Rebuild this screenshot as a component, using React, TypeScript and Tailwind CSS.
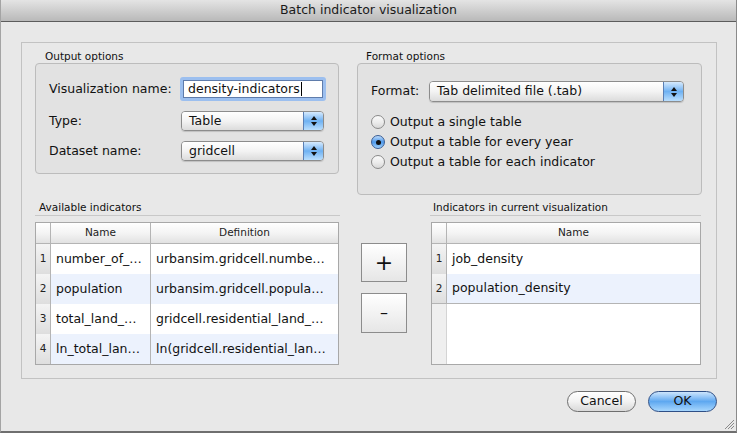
import React from 'react';

const Arrows: React.FC = () => (
  <svg width="8" height="14" viewBox="0 0 8 14">
    <path d="M4 2 L7 6 L1 6 Z" fill="#111" />
    <path d="M4 12 L7 8 L1 8 Z" fill="#111" />
  </svg>
);

const Select: React.FC<{ value: string; className: string }> = ({ value, className }) => (
  <div className={`flex rounded-[4px] border border-[#8c8c8c] overflow-hidden shadow-[0_1px_1px_rgba(0,0,0,0.15)] ${className}`}>
    <div className="flex-1 flex items-center pl-[7px] bg-gradient-to-b from-white via-[#f3f3f3] to-[#dcdcdc] text-[12.5px] text-[#111]">
      {value}
    </div>
    <div className="w-[20px] flex items-center justify-center border-l border-[#5a7fb5] bg-gradient-to-b from-[#d6eafd] via-[#6eb1f2] to-[#b9defd]">
      <Arrows />
    </div>
  </div>
);

const Radio: React.FC<{ checked?: boolean; label: string }> = ({ checked, label }) => (
  <div className="flex items-center h-[20px]">
    {checked ? (
      <div className="w-[14px] h-[14px] rounded-full border border-[#3b5d93] bg-gradient-to-b from-[#bfdcfa] via-[#4c98ea] to-[#9fd0fb] flex items-center justify-center">
        <div className="w-[5px] h-[5px] rounded-full bg-[#111]" />
      </div>
    ) : (
      <div className="w-[14px] h-[14px] rounded-full border border-[#8a8a8a] bg-gradient-to-b from-[#fafafa] via-[#ededed] to-[#d8d8d8]" />
    )}
    <span className="ml-[5px] text-[12.5px] text-[#111]">{label}</span>
  </div>
);

const rowBg = (i: number) => (i % 2 === 0 ? 'bg-white' : 'bg-[#ecf2fd]');

const NumCell: React.FC<{ n?: number }> = ({ n }) => (
  <div className="w-[15px] shrink-0 border-r border-[#b4b4b4] bg-gradient-to-b from-[#f4f4f4] to-[#dedede] flex items-center justify-center text-[10.5px] text-[#222]">
    {n}
  </div>
);

const available = [
  ['number_of_…', 'urbansim.gridcell.numbe…'],
  ['population', 'urbansim.gridcell.popula…'],
  ['total_land_…', 'gridcell.residential_land_…'],
  ['ln_total_lan…', 'ln(gridcell.residential_lan…'],
];

const current = ['job_density', 'population_density'];

export default function App() {
  return (
    <div className="w-[738px] h-[433px] bg-white overflow-hidden font-['DejaVu_Sans','Liberation_Sans',sans-serif]">
      <div className="w-[737px] h-[433px] flex flex-col bg-[#e8e8e8] border-l border-r border-b-2 border-l-[#a4a4a4] border-r-[#8a8a8a] border-b-[#6f6f6f] relative">
        {/* title bar */}
        <div className="h-[22px] shrink-0 flex items-center justify-center bg-gradient-to-b from-[#e4e4e4] to-[#b9b9b9] border-b border-[#5c5c5c] text-[12.5px] text-[#1a1a1a]">
          Batch indicator visualization
        </div>

        <div className="pl-[20px] pt-[20px]">
          <div className="w-[696px] h-[337px] border border-[#c2c2c2] pl-[13px] pr-[13px] pt-[7px] flex flex-col">
            {/* top row */}
            <div className="flex gap-[18px] items-start">
              <div className="w-[304px]">
                <div className="pl-[10px] text-[10.5px] leading-[13px] text-[#111]">Output options</div>
                <div className="h-[111px] rounded-[4px] border border-[#bcbcbc] bg-[#e2e2e2] pl-[13px] pt-[13px]">
                  <div className="flex items-center h-[24px]">
                    <span className="w-[131px] text-[12.5px] text-[#111]">Visualization name:</span>
                    <div className="w-[146px] h-[24px] rounded-[3px] bg-[#9cbfef] p-[3px]">
                      <div className="h-full bg-white border border-[#5f7cab] flex items-center pl-[4px] text-[12.5px] text-[#111]">
                        density-indicators<span className="ml-px w-px h-[14px] bg-black" />
                      </div>
                    </div>
                  </div>
                  <div className="flex items-center h-[20px] mt-[10px]">
                    <span className="w-[132px] text-[12.5px] text-[#111]">Type:</span>
                    <Select value="Table" className="w-[143px] h-[20px]" />
                  </div>
                  <div className="flex items-center h-[20px] mt-[10px]">
                    <span className="w-[132px] text-[12.5px] text-[#111]">Dataset name:</span>
                    <Select value="gridcell" className="w-[143px] h-[20px]" />
                  </div>
                </div>
              </div>

              <div className="w-[345px]">
                <div className="pl-[9px] text-[10.5px] leading-[13px] text-[#111]">Format options</div>
                <div className="h-[132px] rounded-[4px] border border-[#bcbcbc] bg-[#e2e2e2] pl-[13px] pt-[17px]">
                  <div className="flex items-center h-[21px]">
                    <span className="w-[58px] text-[12.5px] text-[#111]">Format:</span>
                    <Select value="Tab delimited file (.tab)" className="w-[255px] h-[21px]" />
                  </div>
                  <div className="mt-[10px]">
                    <Radio label="Output a single table" />
                    <Radio checked label="Output a table for every year" />
                    <Radio label="Output a table for each indicator" />
                  </div>
                </div>
              </div>
            </div>

            {/* bottom row */}
            <div className="flex mt-[6px]">
              <div className="w-[305px]">
                <div className="pl-[4px] text-[10.5px] leading-[13px] text-[#111] border-b border-[#c8c8c8] pb-px">Available indicators</div>
                <div className="mt-[6px] w-[304px] border border-[#a8a8a8] bg-white">
                  <div className="flex h-[21px] border-b border-[#b4b4b4] bg-gradient-to-b from-white via-[#f4f4f4] to-[#e2e2e2] text-[10.5px] text-[#222]">
                    <div className="w-[15px] border-r border-[#b4b4b4]" />
                    <div className="w-[100px] border-r border-[#b4b4b4] flex items-center justify-center">Name</div>
                    <div className="flex-1 flex items-center justify-center">Definition</div>
                  </div>
                  {available.map((r, i) => (
                    <div key={i} className={`flex h-[30px] ${rowBg(i)} text-[12.5px] text-[#111]`}>
                      <NumCell n={i + 1} />
                      <div className="w-[100px] border-r border-[#b4b4b4] flex items-center pl-[5px] whitespace-nowrap overflow-hidden">{r[0]}</div>
                      <div className="flex-1 flex items-center pl-[5px] whitespace-nowrap overflow-hidden">{r[1]}</div>
                    </div>
                  ))}
                </div>
              </div>

              <div className="ml-[21px] pt-[42px] flex flex-col gap-[11px]">
                <button className="w-[46px] h-[39px] border border-[#8c8c8c] bg-gradient-to-b from-white to-[#e6e6e6] text-[22px] leading-none text-[#111] flex items-center justify-center">+</button>
                <button className="w-[46px] h-[40px] border border-[#8c8c8c] bg-gradient-to-b from-white to-[#e6e6e6] text-[16px] leading-none text-[#111] flex items-center justify-center">–</button>
              </div>

              <div className="ml-[23px] w-[271px]">
                <div className="pl-[3px] text-[10.5px] leading-[13px] text-[#111] border-b border-[#c8c8c8] pb-px">Indicators in current visualization</div>
                <div className="mt-[6px] ml-px w-[270px] h-[143px] border border-[#a8a8a8] bg-white flex flex-col">
                  <div className="flex h-[21px] shrink-0 border-b border-[#b4b4b4] bg-gradient-to-b from-white via-[#f4f4f4] to-[#e2e2e2] text-[10.5px] text-[#222]">
                    <div className="w-[15px] border-r border-[#b4b4b4]" />
                    <div className="flex-1 flex items-center justify-center">Name</div>
                  </div>
                  {current.map((name, i) => (
                    <div key={i} className={`flex h-[30px] shrink-0 ${rowBg(i)} text-[12.5px] text-[#111] ${i === current.length - 1 ? 'border-b border-[#b4b4b4]' : ''}`}>
                      <NumCell n={i + 1} />
                      <div className="flex-1 flex items-center pl-[5px]">{name}</div>
                    </div>
                  ))}
                  <div className="flex-1 flex">
                    <div className="w-[15px] bg-[#efefef] border-r border-[#d4d4d4]" />
                  </div>
                </div>
              </div>
            </div>
          </div>

          {/* footer buttons */}
          <div className="w-[696px] flex justify-end gap-[12px] mt-[12px]">
            <button className="w-[69px] h-[21px] rounded-full border border-[#6e6e6e] bg-gradient-to-b from-white via-[#f2f2f2] to-[#d9d9d9] text-[12.5px] text-[#111] flex items-center justify-center">Cancel</button>
            <button className="w-[69px] h-[21px] rounded-full border border-[#2f4f86] bg-gradient-to-b from-[#cde5fc] via-[#5ea8f0] to-[#a6d6fd] text-[12.5px] text-[#111] flex items-center justify-center">OK</button>
          </div>
        </div>

        {/* resize grip */}
        <svg className="absolute right-[2px] bottom-[2px]" width="10" height="10" viewBox="0 0 10 10">
          <path d="M10 1 L1 10 M10 4 L4 10 M10 7 L7 10" stroke="#8a8a8a" strokeWidth="1" />
        </svg>
      </div>
    </div>
  );
}
